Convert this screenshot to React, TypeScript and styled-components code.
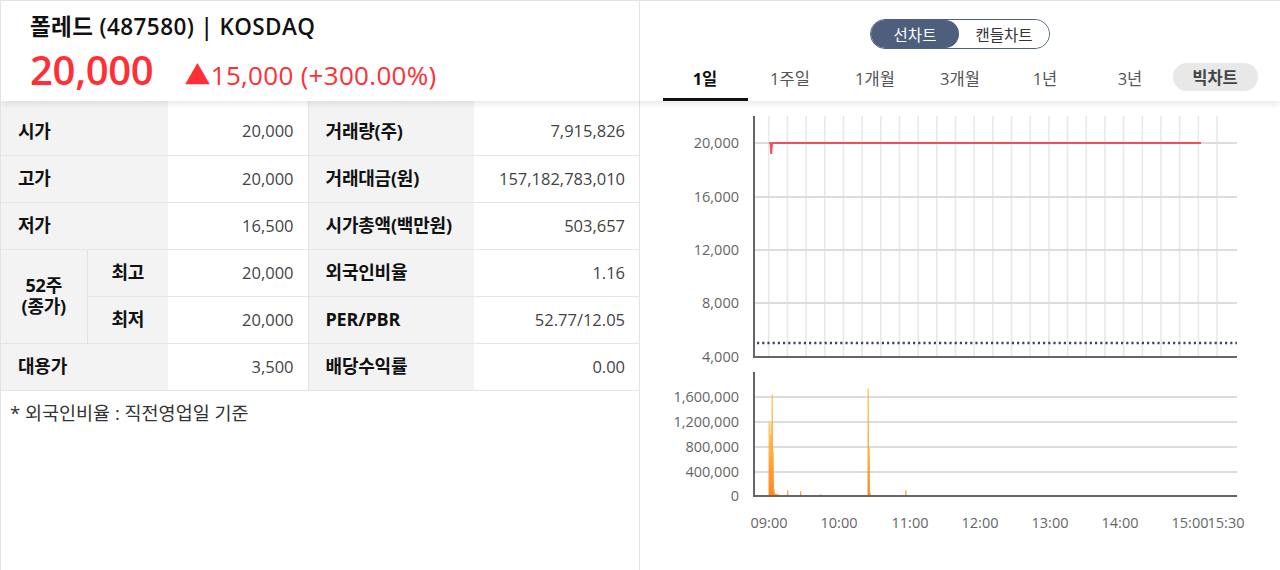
import React from "react";
import styled, { createGlobalStyle } from "styled-components";

const GlobalStyle = createGlobalStyle`
  html, body {
    margin: 0;
    padding: 0;
    background: #fff;
  }
  body {
    font-family: "Open Sans", "Noto Sans CJK KR", sans-serif;
    color: #222;
  }
`;

const FONT = `"Open Sans", "Noto Sans CJK KR", sans-serif`;

const Page = styled.div`
  width: 1280px;
  height: 570px;
  box-sizing: border-box;
  border-top: 1px solid #e3e3e3;
  border-left: 1px solid #e3e3e3;
  display: flex;
  flex-direction: column;
  overflow: hidden;
`;

const HeaderRow = styled.div`
  display: grid;
  grid-template-columns: 639px 1fr;
  height: 100px;
  position: relative;
  z-index: 2;
  box-shadow: 0 3px 7px rgba(0, 0, 0, 0.09);
  background: #fff;
`;

const BodyRow = styled.div`
  display: grid;
  grid-template-columns: 639px 1fr;
  flex: 1;
`;

const LeftCell = styled.div`
  border-right: 1px solid #e3e3e3;
  min-width: 0;
`;

const RightCell = styled.div`
  min-width: 0;
`;

const StockHeader = styled.div`
  padding: 10px 0 0 29px;
`;

const Title = styled.div`
  font-size: 22.5px;
  font-weight: 600;
  color: #111;
  line-height: 32px;
  letter-spacing: 0.4px;
`;

const PriceLine = styled.div`
  display: flex;
  align-items: baseline;
  gap: 31px;
  color: #ff2f35;
  margin-top: 1px;
`;

const Price = styled.span`
  font-size: 40px;
  font-weight: 600;
  line-height: 52px;
  letter-spacing: -0.3px;
`;

const Change = styled.span`
  font-size: 26px;
  font-weight: 500;
  letter-spacing: 0.3px;
`;

const Table = styled.table`
  width: 638px;
  border-collapse: collapse;
  table-layout: fixed;
`;

const Row = styled.tr<{ $first?: boolean }>`
  height: ${(p) => (p.$first ? 54 : 47)}px;
  border-bottom: 1px solid #e6e6e6;
  & > td {
    padding-top: ${(p) => (p.$first ? 7 : 0)}px;
  }
`;

const Label = styled.td<{ $center?: boolean; $divider?: boolean }>`
  background: #f3f3f3;
  font-size: 18px;
  font-weight: 700;
  color: #111;
  padding: 0 0 0 ${(p) => (p.$center ? 0 : 17)}px;
  text-align: ${(p) => (p.$center ? "center" : "left")};
  border-left: ${(p) => (p.$divider ? "1px solid #e2e2e2" : "none")};
  line-height: 21px;
  letter-spacing: -0.2px;
`;

const Value = styled.td`
  background: #fff;
  color: #444;
  font-size: 16.5px;
  text-align: right;
  padding-right: 14px;
`;

const Note = styled.div`
  padding: 12px 0 0 9px;
  font-size: 18.5px;
  color: #333;
  line-height: 20px;
`;

const ChartHeader = styled.div`
  display: flex;
  flex-direction: column;
  align-items: center;
  padding-top: 18px;
`;

const Toggle = styled.div`
  display: flex;
  height: 30px;
  box-sizing: border-box;
  border: 1.5px solid #4e5e7d;
  border-radius: 15px;
  overflow: hidden;
`;

const ToggleItem = styled.div<{ $on?: boolean; $w: number }>`
  width: ${(p) => p.$w}px;
  display: flex;
  align-items: center;
  justify-content: center;
  font-size: 15.5px;
  color: ${(p) => (p.$on ? "#fff" : "#333")};
  background: ${(p) => (p.$on ? "#4e5e7d" : "#fff")};
  border-radius: 15px;
`;

const Tabs = styled.div`
  display: grid;
  grid-template-columns: repeat(7, 85px);
  margin-top: 11px;
  height: 41px;
`;

const Tab = styled.div<{ $active?: boolean }>`
  display: flex;
  align-items: center;
  justify-content: center;
  font-size: 16.5px;
  color: ${(p) => (p.$active ? "#111" : "#555")};
  font-weight: ${(p) => (p.$active ? 700 : 400)};
  border-bottom: 3px solid ${(p) => (p.$active ? "#111" : "transparent")};
  box-sizing: border-box;
  padding-bottom: 2px;
`;

const BigChart = styled.div`
  display: flex;
  align-items: center;
  justify-content: center;
  height: 28px;
  margin-top: 3px;
  border-radius: 14px;
  background: #e8e8e8;
  color: #444;
  font-weight: 700;
  font-size: 16.5px;
`;

const ChartSvg = styled.svg`
  display: block;
  font-family: ${FONT};
`;

const vGrid = Array.from({ length: 25 }, (_, k) => 768.7 + 18.68 * k);
const priceTicks = [
  { y: 143, t: "20,000" },
  { y: 197, t: "16,000" },
  { y: 250, t: "12,000" },
  { y: 303, t: "8,000" },
  { y: 357, t: "4,000" },
];
const volTicks = [
  { y: 397, t: "1,600,000" },
  { y: 422, t: "1,200,000" },
  { y: 447, t: "800,000" },
  { y: 472, t: "400,000" },
  { y: 496, t: "0" },
];
const times = [
  { x: 769, t: "09:00" },
  { x: 839, t: "10:00" },
  { x: 910, t: "11:00" },
  { x: 980, t: "12:00" },
  { x: 1050, t: "13:00" },
  { x: 1120, t: "14:00" },
  { x: 1190, t: "15:00" },
  { x: 1226, t: "15:30" },
];
// [x, volume]
const bars: Array<[number, number]> = [
  [768.6, 1200000],
  [769.6, 1000000],
  [770.6, 1180000],
  [771.6, 1640000],
  [772.6, 720000],
  [773.6, 110000],
  [774.6, 40000],
  [775.6, 40000],
  [776.6, 30000],
  [777.6, 30000],
  [787.2, 100000],
  [800, 80000],
  [820, 30000],
  [867.6, 1740000],
  [868.6, 780000],
  [869.6, 60000],
  [905.2, 100000],
];

function PriceChart() {
  return (
    <ChartSvg width={640} height={469} viewBox="0 0 640 469">
      <defs>
        <linearGradient id="volGrad" x1="0" y1="0" x2="0" y2="1">
          <stop offset="0" stopColor="#ffc04a" />
          <stop offset="1" stopColor="#ff7300" />
        </linearGradient>
      </defs>
      <g transform="translate(-640 -101)">
        {vGrid.map((x) => (
          <line key={x} x1={x} y1={116} x2={x} y2={356} stroke="#e8e8e8" strokeWidth={1.6} />
        ))}
        {priceTicks.slice(0, 4).map((p) => (
          <line key={p.y} x1={754} y1={p.y} x2={1237} y2={p.y} stroke="#dcdcdc" strokeWidth={1.8} />
        ))}
        {priceTicks.map((p) => (
          <text key={p.t} x={739} y={p.y + 5} textAnchor="end" fontSize={14.5} fill="#666">
            {p.t}
          </text>
        ))}
        <line x1={757} y1={343} x2={1237} y2={343} stroke="#3b4a5c" strokeWidth={2.4} strokeDasharray="2.2 3" />
        <path d="M769 143 L770.6 143 L771.2 154 L772 143 L1201 143" fill="none" stroke="#f0505c" strokeWidth={2} />
        <line x1={754} y1={116} x2={754} y2={358} stroke="#666" strokeWidth={2} />
        <line x1={753} y1={357} x2={1237} y2={357} stroke="#666" strokeWidth={2} />

        {volTicks.slice(0, 4).map((p) => (
          <line key={p.y} x1={754} y1={p.y} x2={1237} y2={p.y} stroke="#dcdcdc" strokeWidth={1.8} />
        ))}
        {volTicks.map((p) => (
          <text key={p.t} x={739} y={p.y + 5} textAnchor="end" fontSize={14.5} fill="#666">
            {p.t}
          </text>
        ))}
        {bars.map(([x, v]) => {
          const h = (v / 1600000) * 99;
          return <rect key={x} x={x} y={496 - h} width={1.2} height={h} fill="url(#volGrad)" />;
        })}
        <line x1={754} y1={372} x2={754} y2={497} stroke="#666" strokeWidth={2} />
        <line x1={753} y1={496} x2={1237} y2={496} stroke="#666" strokeWidth={2} />
        {times.map((t) => (
          <text key={t.t} x={t.x} y={528} textAnchor="middle" fontSize={14.5} fill="#666">
            {t.t}
          </text>
        ))}
      </g>
    </ChartSvg>
  );
}

const tabs = ["1일", "1주일", "1개월", "3개월", "1년", "3년"];

export default function App() {
  return (
    <>
      <GlobalStyle />
      <Page>
        <HeaderRow>
          <LeftCell>
            <StockHeader>
              <Title>폴레드 (487580) | KOSDAQ</Title>
              <PriceLine>
                <Price>20,000</Price>
                <Change>▲15,000 (+300.00%)</Change>
              </PriceLine>
            </StockHeader>
          </LeftCell>
          <RightCell>
            <ChartHeader>
              <Toggle>
                <ToggleItem $on $w={88}>선차트</ToggleItem>
                <ToggleItem $w={90}>캔들차트</ToggleItem>
              </Toggle>
              <Tabs>
                {tabs.map((t, i) => (
                  <Tab key={t} $active={i === 0}>
                    {t}
                  </Tab>
                ))}
                <BigChart>빅차트</BigChart>
              </Tabs>
            </ChartHeader>
          </RightCell>
        </HeaderRow>
        <BodyRow>
          <LeftCell>
            <Table>
              <colgroup>
                <col style={{ width: 86 }} />
                <col style={{ width: 81 }} />
                <col style={{ width: 140 }} />
                <col style={{ width: 166 }} />
                <col style={{ width: 165 }} />
              </colgroup>
              <tbody>
                <Row $first>
                  <Label colSpan={2}>시가</Label>
                  <Value>20,000</Value>
                  <Label $divider>거래량(주)</Label>
                  <Value>7,915,826</Value>
                </Row>
                <Row>
                  <Label colSpan={2}>고가</Label>
                  <Value>20,000</Value>
                  <Label $divider>거래대금(원)</Label>
                  <Value>157,182,783,010</Value>
                </Row>
                <Row>
                  <Label colSpan={2}>저가</Label>
                  <Value>16,500</Value>
                  <Label $divider>시가총액(백만원)</Label>
                  <Value>503,657</Value>
                </Row>
                <Row>
                  <Label rowSpan={2} $center>
                    52주
                    <br />
                    (종가)
                  </Label>
                  <Label $center $divider>최고</Label>
                  <Value>20,000</Value>
                  <Label $divider>외국인비율</Label>
                  <Value>1.16</Value>
                </Row>
                <Row>
                  <Label $center $divider>최저</Label>
                  <Value>20,000</Value>
                  <Label $divider>PER/PBR</Label>
                  <Value>52.77/12.05</Value>
                </Row>
                <Row>
                  <Label colSpan={2}>대용가</Label>
                  <Value>3,500</Value>
                  <Label $divider>배당수익률</Label>
                  <Value>0.00</Value>
                </Row>
              </tbody>
            </Table>
            <Note>* 외국인비율 : 직전영업일 기준</Note>
          </LeftCell>
          <RightCell>
            <PriceChart />
          </RightCell>
        </BodyRow>
      </Page>
    </>
  );
}
